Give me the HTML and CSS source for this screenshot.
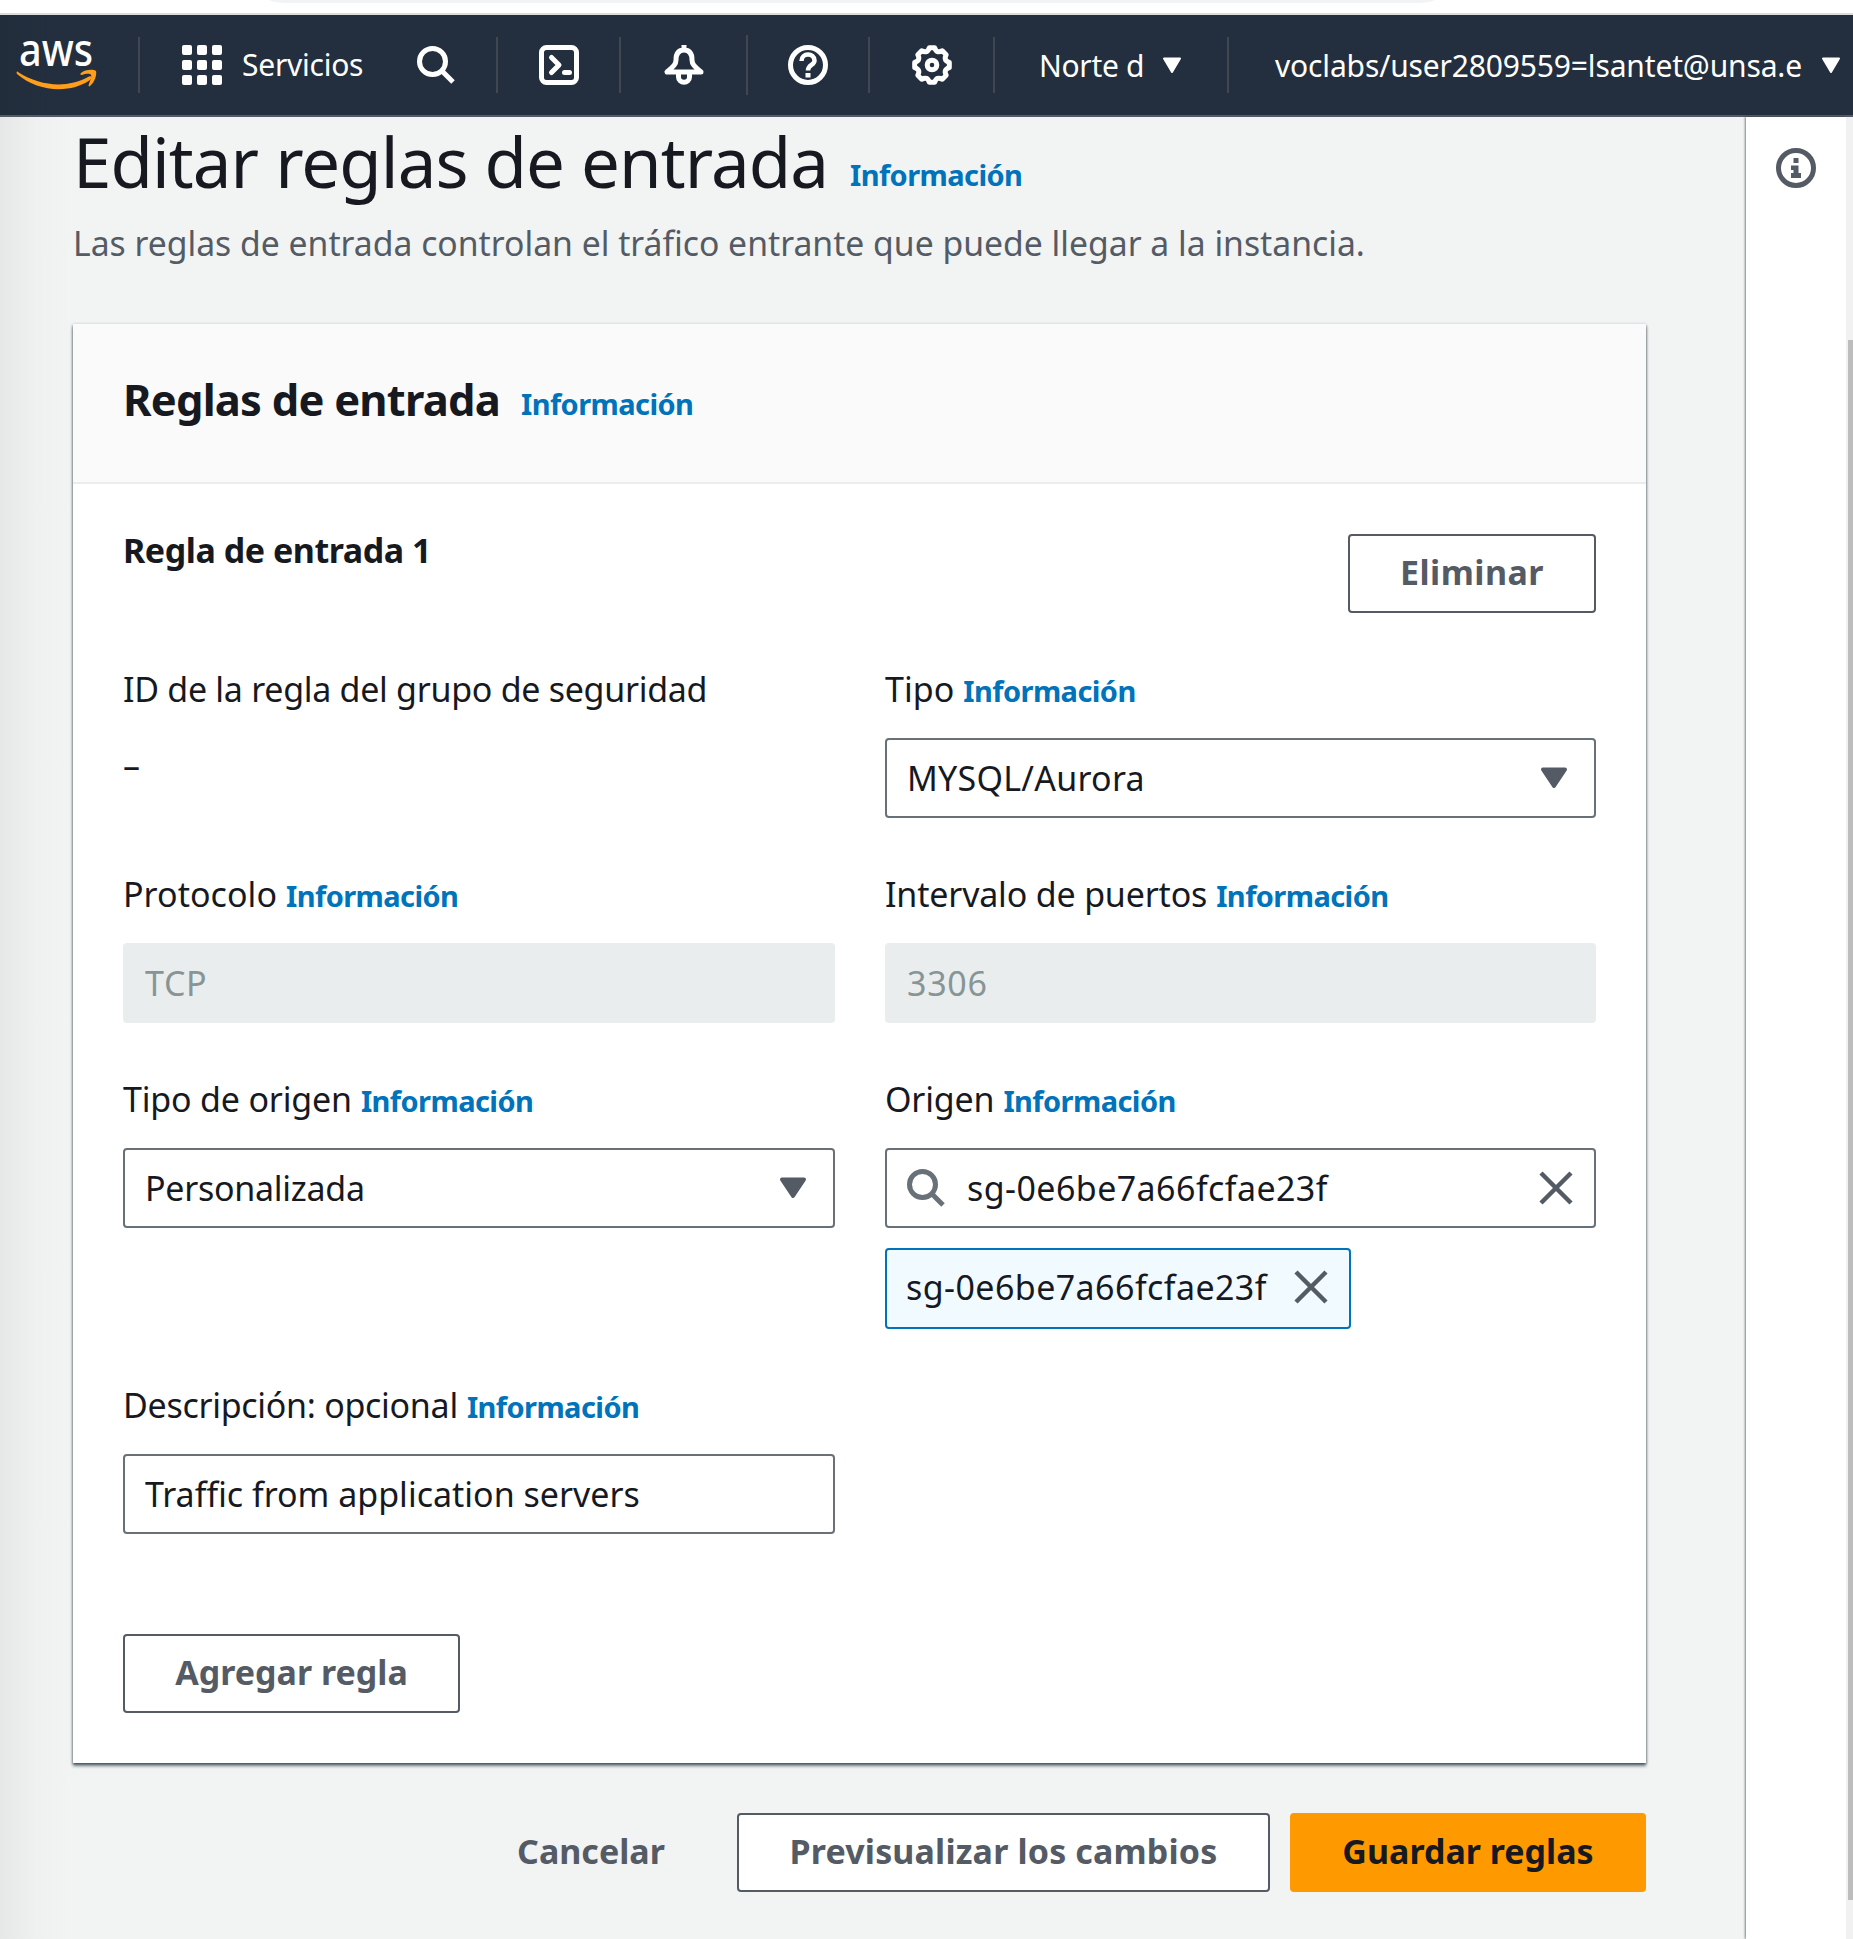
FILE: index.html
```html
<!DOCTYPE html>
<html lang="es">
<head>
<meta charset="utf-8">
<title>Editar reglas de entrada</title>
<link rel="stylesheet" href="styles.css">
</head>
<body>
<div class="browser-edge"><div class="omnibox"></div></div>
<header class="nav">
  <div class="cell cell-logo">
    <svg class="logo" viewBox="0 0 80 52" width="80" height="52">
      <text class="logo-text" x="2" y="26.500" textLength="74" lengthAdjust="spacingAndGlyphs">aws</text>
      <g fill="#ff9d1c" transform="translate(0 -2)"><path d="M1 35C24 50 51 51 71 40C74 38 76 41 73 43C53 57 21 55 0 37C-1 35 0 34 1 35Z"/>
      <path d="M64 36C68 32 77 32 79 34C80 37 78 45 73 49C72 50 71 49 72 47C73 44 75 40 74 38C73 36 68 37 65 38C63 38 63 37 64 36Z"/></g>
    </svg>
  </div>
  <div class="cell cell-services">
    <svg width="40" height="40" viewBox="0 0 40 40" fill="#fff"><rect width="10" height="10" rx="2"/><rect x="15" width="10" height="10" rx="2"/><rect x="30" width="10" height="10" rx="2"/><rect y="15" width="10" height="10" rx="2"/><rect x="15" y="15" width="10" height="10" rx="2"/><rect x="30" y="15" width="10" height="10" rx="2"/><rect y="30" width="10" height="10" rx="2"/><rect x="15" y="30" width="10" height="10" rx="2"/><rect x="30" y="30" width="10" height="10" rx="2"/></svg>
    <span class="nav-text services">Servicios</span>
    <svg class="nav-search" width="38" height="38" viewBox="0 0 38 38" fill="none" stroke="#fff" stroke-width="5"><circle cx="15.500" cy="15.500" r="13"/><path d="M24.500 24.500L36 36"/></svg>
  </div>
  <div class="cell cell-icon cell-shell">
    <svg width="40" height="40" viewBox="0 0 40 40" fill="none" stroke="#fff" stroke-width="5"><rect x="2.500" y="2.500" width="35" height="35" rx="5"/><path d="M12.500 12.500L20 20L12.500 27.500M25.500 27.500H30.500" stroke-linecap="round" stroke-linejoin="round"/></svg>
  </div>
  <div class="cell cell-icon cell-bell">
    <svg width="40" height="40" viewBox="0 0 40 40" fill="none" stroke="#fff" stroke-width="5" stroke-linejoin="round"><path d="M20 0V5M20 5C14 5 12 9 12 15C12 19 10 21 3 27H37C30 21 28 19 28 15C28 9 26 5 20 5Z"/><path d="M14.500 28V32C14.500 39 25.500 39 25.500 32V28"/></svg>
  </div>
  <div class="cell cell-icon cell-help">
    <svg width="40" height="40" viewBox="0 0 40 40" fill="none" stroke="#fff"><circle cx="20" cy="20" r="17.500" stroke-width="5"/><path d="M13.500 16C13.500 7.500 26.500 7.500 26.500 15.500C26.500 20.500 20 19.500 20 25.500" stroke-width="4.500"/><path d="M20 28V32.500" stroke-width="5"/></svg>
  </div>
  <div class="cell cell-icon cell-gear">
    <svg width="40" height="40" viewBox="0 0 40 40" fill="none" stroke="#fff" stroke-width="5" stroke-linejoin="round"><path d="M17.300 2.700H22.700Q24.600 8.900 30.300 5.800L34.200 9.700Q31.100 15.400 37.300 17.300V22.700Q31.100 24.600 34.200 30.300L30.300 34.200Q24.600 31.100 22.700 37.300H17.300Q15.400 31.100 9.700 34.200L5.800 30.300Q8.900 24.600 2.700 22.700V17.300Q8.900 15.400 5.800 9.700L9.700 5.800Q15.400 8.900 17.300 2.700Z"/><circle cx="20" cy="20" r="4.800"/></svg>
  </div>
  <div class="cell cell-region">
    <span class="nav-text region">Norte d</span>
    <svg class="nav-caret" width="20" height="17" viewBox="0 0 20 17"><path d="M2 1.500H18L10 15Z" fill="#fff" stroke="#fff" stroke-width="2" stroke-linejoin="round"/></svg>
  </div>
  <div class="cell cell-user">
    <span class="nav-text user">voclabs/user2809559=lsantet@unsa.e</span>
    <svg class="nav-caret" width="20" height="17" viewBox="0 0 20 17"><path d="M2 1.500H18L10 15Z" fill="#fff" stroke="#fff" stroke-width="2" stroke-linejoin="round"/></svg>
  </div>
</header>
<div class="body">
  <main class="content">
    <div class="page-head"><h1 class="title">Editar reglas de entrada</h1><a class="info">Información</a></div>
    <p class="subtitle">Las reglas de entrada controlan el tráfico entrante que puede llegar a la instancia.</p>
    <section class="card">
      <div class="card-head"><h2 class="card-title">Reglas de entrada</h2><a class="info">Información</a></div>
      <div class="card-body">
        <div class="rule-head"><h3 class="rule-title">Regla de entrada 1</h3><button class="btn btn-delete">Eliminar</button></div>
        <div class="fields">
          <div class="field"><div class="label label-long">ID de la regla del grupo de seguridad</div><div class="plain">–</div></div>
          <div class="field"><div class="label label-short">Tipo<a class="info">Información</a></div>
            <div class="box"><span class="type-value">MYSQL/Aurora</span><svg class="caret" width="28" height="22" viewBox="0 0 28 22"><path d="M3 2.500H25L14 19Z" fill="#545b64" stroke="#545b64" stroke-width="4" stroke-linejoin="round"/></svg></div></div>
          <div class="field"><div class="label label-short">Protocolo<a class="info">Información</a></div><div class="box disabled">TCP</div></div>
          <div class="field"><div class="label">Intervalo de puertos<a class="info">Información</a></div><div class="box disabled">3306</div></div>
          <div class="field"><div class="label">Tipo de origen<a class="info">Información</a></div>
            <div class="box"><span class="source-value">Personalizada</span><svg class="caret" width="28" height="22" viewBox="0 0 28 22"><path d="M3 2.500H25L14 19Z" fill="#545b64" stroke="#545b64" stroke-width="4" stroke-linejoin="round"/></svg></div></div>
          <div class="field"><div class="label">Origen<a class="info">Información</a></div>
            <div class="box"><svg class="search" width="38" height="38" viewBox="0 0 38 38" fill="none" stroke="#687078" stroke-width="5"><circle cx="15.500" cy="15.500" r="13"/><path d="M24.500 24.500L36 36"/></svg><span class="sg">sg-0e6be7a66fcfae23f</span><svg class="clear" width="34" height="34" viewBox="0 0 34 34" stroke="#545b64" stroke-width="4.500"><path d="M2 2L32 32M32 2L2 32"/></svg></div>
            <div class="token"><span class="sg">sg-0e6be7a66fcfae23f</span><svg width="34" height="34" viewBox="0 0 34 34" stroke="#545b64" stroke-width="4.500"><path d="M2 2L32 32M32 2L2 32"/></svg></div></div>
          <div class="field"><div class="label label-long">Descripción: opcional<a class="info">Información</a></div><div class="box">Traffic from application servers</div></div>
        </div>
        <button class="btn btn-add">Agregar regla</button>
      </div>
    </section>
    <div class="actions"><button class="btn btn-link">Cancelar</button><button class="btn btn-preview">Previsualizar los cambios</button><button class="btn btn-primary">Guardar reglas</button></div>
  </main>
  <aside class="help-panel"><svg width="40" height="40" viewBox="0 0 40 40" fill="none" stroke="#545b64"><circle cx="20" cy="20" r="17.500" stroke-width="5"/><path fill="#545b64" stroke="none" d="M17.500 10H22.500V15H17.500ZM15 17.500H22.500V25H25V30H15V25H17.500V22H15Z"/></svg></aside>
  <div class="scrollbar"><div class="thumb"></div></div>
</div>
</body>
</html>
```
FILE: styles.css
```css
* { box-sizing: border-box; }
body { margin: 0; width: 1853px; height: 1939px; overflow: hidden; background: #f2f3f3; color: #16191f; font-family: "Noto Sans", sans-serif; font-size: 34px; white-space: nowrap; }
h1, h2, h3, p { margin: 0; }
svg { display: block; flex: none; overflow: visible; }

.browser-edge { height: 15px; background: #fff; border-bottom: 2px solid #dcdcdc; padding-left: 270px; }
.omnibox { width: 1164px; height: 3px; background: #f1f3f4; border-radius: 0 0 20px 20px / 0 0 3px 3px; }

.nav { height: 102px; display: flex; align-items: center; background: linear-gradient(90deg, #212d3b, #232f3e 60px); border-bottom: 2px solid #545b64; }
.cell { height: 56px; display: flex; align-items: center; border-right: 2px solid #414750; flex: none; }
.cell-logo { width: 140px; padding-left: 17px; }
.logo-text { font: 500 45px "Noto Sans", sans-serif; fill: #fff; }
.cell-services { width: 358px; padding-left: 42px; }
.nav-text { color: #fff; font-size: 30px; line-height: 40px; }
.services { width: 195px; padding-left: 20px; letter-spacing: -.25px; }
.cell-icon { justify-content: center; }
.cell-shell { width: 123px; }
.cell-bell { width: 127px; height: 60px; }
.cell-help { width: 122px; }
.cell-gear { width: 125px; }
.cell-region { width: 234px; padding-left: 44px; }
.cell-user { width: 624px; padding-left: 46px; border: 0; }
.region { letter-spacing: -.3px; padding-top: 2px; }
.user { letter-spacing: -.15px; padding-top: 2px; }
.nav-caret { margin-left: auto; }
.cell-region .nav-caret { margin-right: 45px; }
.cell-user .nav-caret { margin-right: 12px; }

.body { height: 1822px; display: flex; }
.content { width: 1746px; flex: none; padding: 0 100px 0 73px; background: linear-gradient(90deg, #e6e7e7, #eff0f0 36px, #f2f3f3 70px); }
.page-head { height: 101px; display: flex; align-items: baseline; }
.title { width: 777px; font-size: 69px; font-weight: 400; line-height: 88px; letter-spacing: -.93px; }
.info { color: #0073bb; font-size: 29px; font-weight: 700; letter-spacing: -.58px; }
.page-head .info { line-height: 30px; padding-bottom: 2px; transform: translateY(-2px); }
.subtitle { color: #545b64; font-size: 33.72px; line-height: 50px; }

.card { margin-top: 56px; height: 1439px; background: #fff; box-shadow: 0 3px 3px rgba(0,28,36,.55), 1px 1px 2px rgba(0,28,36,.25), -1px 1px 2px rgba(0,28,36,.25), 0 -2px 0 #eaeded; }
.card-head { height: 160px; padding: 43px 51px 0 50px; display: flex; align-items: baseline; background: #fafafa; border-bottom: 2px solid #eaeded; }
.card-title { width: 398px; font-size: 43.5px; line-height: 64px; letter-spacing: -.78px; }
.card-head .info { transform: translateY(-1px); }
.card-body { padding: 50px; }
.rule-head { height: 79px; display: flex; justify-content: space-between; }
.rule-title { font-size: 34px; line-height: 32px; letter-spacing: -.46px; }
.fields { margin-top: 51px; display: grid; grid-template-columns: 712px 711px; gap: 51px 50px; }
.label { height: 50px; line-height: 50px; display: flex; align-items: baseline; letter-spacing: -.18px; }
.label-short { letter-spacing: .05px; }
.label-long { letter-spacing: -.29px; }
.label .info { margin-left: 9px; }
.plain { line-height: 50px; margin-top: 26px; }
.box { height: 80px; margin-top: 24px; padding: 0 26px 1px 20px; display: flex; align-items: center; border: 2px solid #687078; border-radius: 4px; background: #fff; }
.disabled { background: #eaeded; border-color: #eaeded; color: #879596; letter-spacing: .7px; }
.type-value { letter-spacing: .25px; }
.source-value { letter-spacing: -.27px; }
.sg { letter-spacing: .43px; }
.caret { margin-left: auto; }
.clear { margin: 0 -5px 0 auto; }
.search { margin-right: 22px; }
.token { width: 466px; height: 81px; margin-top: 20px; padding: 0 21px 4px 19px; display: flex; align-items: center; justify-content: space-between; border: 2px solid #0073bb; border-radius: 4px; background: #f1faff; }
.btn { height: 79px; padding: 0 0 3px; font: 700 34px/50px "Noto Sans", sans-serif; color: #545b64; background: #fff; border: 2px solid #545b64; border-radius: 4px; }
.btn-delete { width: 248px; letter-spacing: .45px; }
.btn-add { width: 337px; margin-top: 100px; display: block; }
.actions { margin-top: 50px; display: flex; justify-content: flex-end; gap: 20px; }
.btn-link { width: 250px; margin-right: 1px; background: none; border-color: transparent; }
.btn-preview { width: 533px; letter-spacing: .15px; }
.btn-primary { width: 356px; color: #16191f; background: #ff9900; border-color: #ff9900; }

.help-panel { width: 100px; background: #fff; padding: 31px 0 0 30px; box-shadow: -1px 0 2px rgba(0,28,36,.5); }
.scrollbar { width: 7px; background: #f1f1f1; padding: 223px 0 0 2px; }
.thumb { height: 1560px; background: #bdbdbd; }
```
